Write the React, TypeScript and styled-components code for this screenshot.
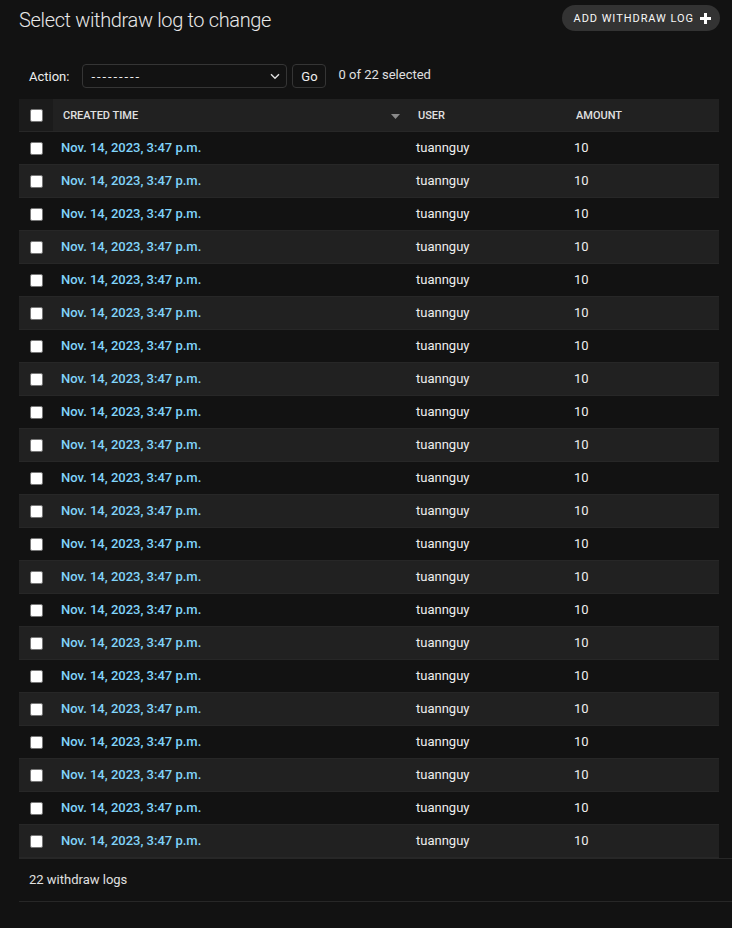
import React from "react";
import styled, { createGlobalStyle } from "styled-components";

const GlobalStyle = createGlobalStyle`
  html, body {
    margin: 0;
    padding: 0;
    background: #121212;
  }
  body {
    font-family: Roboto, "Noto Sans", "Liberation Sans", sans-serif;
    color: #eeeeee;
    font-size: 13px;
  }
`;

interface LogRow {
  id: number;
  created: string;
  user: string;
  amount: number;
}

const rows: LogRow[] = Array.from({ length: 22 }, (_, i) => ({
  id: i + 1,
  created: "Nov. 14, 2023, 3:47 p.m.",
  user: "tuannguy",
  amount: 10,
}));

const App: React.FC = () => {
  return (
    <>
      <GlobalStyle />
      <Content>
        <TitleRow>
          <Title>Select withdraw log to change</Title>
          <AddButton href="#">
            ADD WITHDRAW LOG
            <svg width="11" height="11" viewBox="0 0 11 11">
              <path d="M4 0h3v4h4v3H7v4H4V7H0V4h4z" fill="#ffffff" />
            </svg>
          </AddButton>
        </TitleRow>

        <Actions>
          <ActionLabel>Action:</ActionLabel>
          <SelectBox>
            <Dashes>---------</Dashes>
            <svg width="10" height="7" viewBox="0 0 10 7">
              <path d="M1 1.2l4 4 4-4" fill="none" stroke="#e0e0e0" strokeWidth="1.4" />
            </svg>
          </SelectBox>
          <GoButton>Go</GoButton>
          <Counter>0 of 22 selected</Counter>
        </Actions>

        <Table>
          <colgroup>
            <col style={{ width: 34 }} />
            <col style={{ width: 355 }} />
            <col style={{ width: 158 }} />
            <col />
          </colgroup>
          <thead>
            <tr>
              <HeadCell $shade="#1b1b1b">
                <CheckWrap>
                  <Check type="checkbox" />
                </CheckWrap>
              </HeadCell>
              <HeadCell $shade="#212121">
                <SortedHead>
                  <span>Created time</span>
                  <svg width="9" height="5" viewBox="0 0 9 5">
                    <path d="M0 0h9L4.5 5z" fill="#8a8a8a" />
                  </svg>
                </SortedHead>
              </HeadCell>
              <HeadCell $shade="#212121">
                <HeadText>User</HeadText>
              </HeadCell>
              <HeadCell $shade="#212121">
                <HeadText>Amount</HeadText>
              </HeadCell>
            </tr>
          </thead>
          <tbody>
            {rows.map((row) => (
              <Row key={row.id}>
                <CheckCell>
                  <Check type="checkbox" />
                </CheckCell>
                <LinkCell>
                  <a href="#">{row.created}</a>
                </LinkCell>
                <Cell>{row.user}</Cell>
                <Cell>{row.amount}</Cell>
              </Row>
            ))}
          </tbody>
        </Table>

        <Paginator>22 withdraw logs</Paginator>
      </Content>
    </>
  );
};

export default App;

const Content = styled.div`
  padding-left: 19px;
`;

const TitleRow = styled.div`
  display: flex;
  justify-content: space-between;
  align-items: flex-start;
  padding-right: 12px;
`;

const Title = styled.h1`
  margin: 0;
  padding-top: 7px;
  font-size: 20px;
  line-height: 26px;
  font-weight: 300;
  letter-spacing: -0.35px;
  color: #e8e8e8;
`;

const AddButton = styled.a`
  display: flex;
  align-items: center;
  gap: 6px;
  margin-top: 5px;
  height: 26px;
  box-sizing: border-box;
  padding: 0 9px 0 12px;
  background: #333333;
  border-radius: 15px;
  color: #f7f7f7;
  font-size: 11px;
  letter-spacing: 0.95px;
  text-decoration: none;
`;

const Actions = styled.div`
  display: flex;
  align-items: center;
  height: 24px;
  margin-top: 31px;
  padding-left: 10px;
`;

const ActionLabel = styled.span`
  font-size: 13px;
  color: #eeeeee;
  margin-right: 13px;
`;

const SelectBox = styled.div`
  display: flex;
  align-items: center;
  justify-content: space-between;
  box-sizing: border-box;
  width: 205px;
  height: 24px;
  padding: 0 6px 0 8px;
  border: 1px solid #353535;
  border-radius: 4px;
  background: #121212;
  color: #eeeeee;
  font-size: 13px;
`;

const Dashes = styled.span`
  letter-spacing: 1.9px;
`;

const GoButton = styled.button`
  box-sizing: border-box;
  height: 24px;
  width: 34px;
  margin-left: 5px;
  padding: 0;
  border: 1px solid #353535;
  border-radius: 4px;
  background: #121212;
  color: #eeeeee;
  font-family: inherit;
  font-size: 13px;
`;

const Counter = styled.span`
  margin-left: 12px;
  margin-top: -4px;
  font-size: 13px;
  color: #e0e0e0;
`;

const Table = styled.table`
  margin-top: 11px;
  width: 700px;
  border-collapse: collapse;
  table-layout: fixed;
`;

const HeadCell = styled.th<{ $shade: string }>`
  height: 32px;
  padding: 0;
  background: ${(p) => p.$shade};
  border-bottom: 1px solid #272727;
  text-align: left;
  vertical-align: middle;
`;

const CheckWrap = styled.div`
  display: flex;
  justify-content: center;
`;

const HeadText = styled.div`
  padding: 0 10px;
  font-size: 11px;
  font-weight: 500;
  text-transform: uppercase;
  color: #e0e0e0;
`;

const SortedHead = styled(HeadText)`
  display: flex;
  align-items: center;
  justify-content: space-between;
  padding-right: 8px;
  svg {
    margin-top: 3px;
  }
`;

const Row = styled.tr`
  &:nth-child(even) {
    background: #212121;
  }
`;

const Cell = styled.td`
  height: 16px;
  padding: 8px;
  line-height: 16px;
  font-size: 13px;
  color: #eeeeee;
  border-bottom: 1px solid #272727;
  white-space: nowrap;
`;

const CheckCell = styled(Cell)`
  padding: 8px 0;
  text-align: center;
`;

const LinkCell = styled(Cell)`
  font-weight: 500;
  a {
    color: #81d4fa;
    text-decoration: none;
  }
`;

const Check = styled.input`
  appearance: none;
  display: block;
  margin: 0 auto;
  width: 13px;
  height: 13px;
  box-sizing: border-box;
  background: #ffffff;
  border: 1px solid #767676;
  border-radius: 2px;
`;

const Paginator = styled.div`
  padding: 10px 10px;
  line-height: 22px;
  font-size: 13px;
  color: #e0e0e0;
  border-top: 1px solid #272727;
  border-bottom: 1px solid #272727;
`;
